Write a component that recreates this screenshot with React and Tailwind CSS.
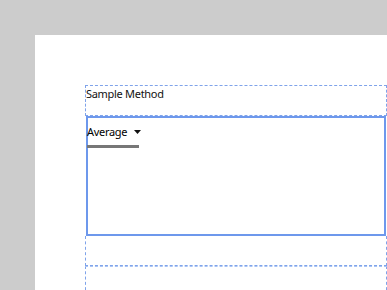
import React from "react";

function App() {
  return (
    <div className="w-[387px] h-[290px] bg-[#cccccc] overflow-hidden" style={{ fontFamily: '"Noto Sans", "Open Sans", sans-serif' }}>
      <div className="ml-[35px] mt-[35px] h-[255px] bg-white pl-[50px] pt-[50px]">
        <div className="w-[302px] flex flex-col">
          {/* label row */}
          <div className="h-[31px] border border-dashed border-[#7fa3ea] text-[11px] leading-[15px] text-[#111] tracking-[-0.3px]">
            Sample Method
          </div>
          {/* selected dropdown row */}
          <div className="mx-[1px] h-[120px] border-2 border-[#6d98ec]">
            <div className="inline-flex flex-col -ml-[1px]">
              <div className="flex items-center gap-[7px] text-[11px] leading-[15px] text-black tracking-[-0.3px]">
                Average
                <svg width="7" height="4" viewBox="0 0 7 4" className="mt-[1px]">
                  <path d="M0 0 L7 0 L3.5 4 Z" fill="#111" />
                </svg>
              </div>
              <div className="mt-[6px] h-[3px] w-[52px] bg-[#777777]" />
            </div>
          </div>
          {/* empty rows */}
          <div className="h-[30px] border border-t-0 border-dashed border-[#7fa3ea]" />
          <div className="h-[40px] border border-dashed border-[#a9c4f4] border-l-[#7fa3ea] border-r-[#7fa3ea]" />
        </div>
      </div>
    </div>
  );
}

export default App;
